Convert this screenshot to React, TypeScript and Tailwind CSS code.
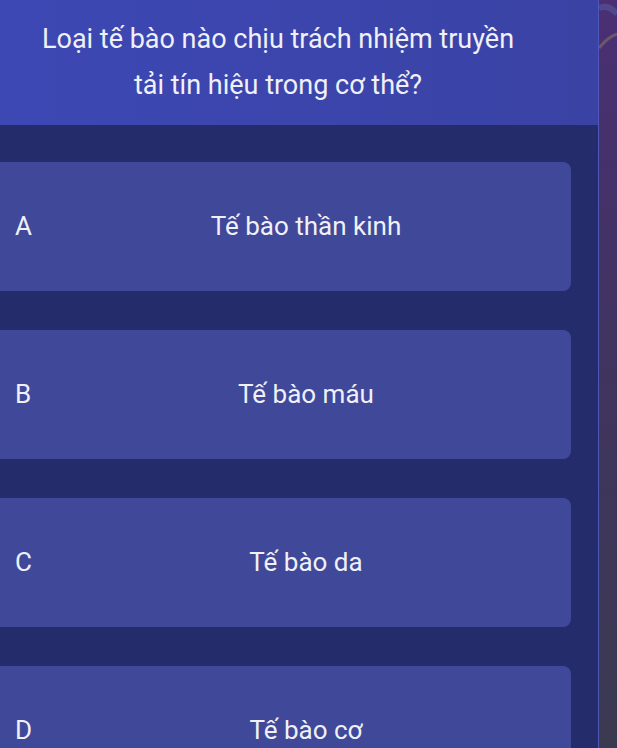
import React from 'react';

const options = [
    { key: 'A', text: 'Tế bào thần kinh' },
    { key: 'B', text: 'Tế bào máu' },
    { key: 'C', text: 'Tế bào da' },
    { key: 'D', text: 'Tế bào cơ' },
];

const App: React.FC = () => {
    return (
        <div className="flex w-[617px] h-[748px] overflow-hidden bg-[#3a3a50]" style={{ fontFamily: 'Roboto, "Noto Sans", sans-serif' }}>
            <div className="flex flex-col w-[599px] shrink-0 bg-[#252c6c] border-r border-[#4c57b8]">
                <div className="h-[125px] shrink-0 bg-gradient-to-r from-[#3d48b4] to-[#3a42a4] pl-[34px] pr-[76px] pt-[16px]">
                    <p className="text-center text-[#f0f0f8] text-[27px] leading-[46px]">
                        Loại tế bào nào chịu trách nhiệm truyền tải tín hiệu trong cơ thể?
                    </p>
                </div>
                <div className="flex flex-col gap-[39px] pt-[37px] pr-[27px]">
                    {options.map(opt => (
                        <div key={opt.key} className="flex items-center h-[129px] shrink-0 bg-[#3f4899] rounded-r-lg text-[#f0f0f8] text-[26px]">
                            <span className="w-[41px] pl-[15px] shrink-0">{opt.key}</span>
                            <span className="flex-1 text-center">{opt.text}</span>
                        </div>
                    ))}
                </div>
            </div>
            <div className="relative flex-1 bg-gradient-to-b from-[#4a2f74] via-[#40345e] to-[#3a3a50]">
                <svg className="absolute top-0 left-0" width="18" height="160" viewBox="0 0 18 160">
                    <path d="M0 48 Q8 38 18 34" stroke="#a89060" strokeWidth="3" fill="none" opacity="0.4" />
                    <path d="M0 8 Q10 4 18 14" stroke="#5a60a8" strokeWidth="6" fill="none" opacity="0.5" />
                </svg>
            </div>
        </div>
    );
};

export default App;
